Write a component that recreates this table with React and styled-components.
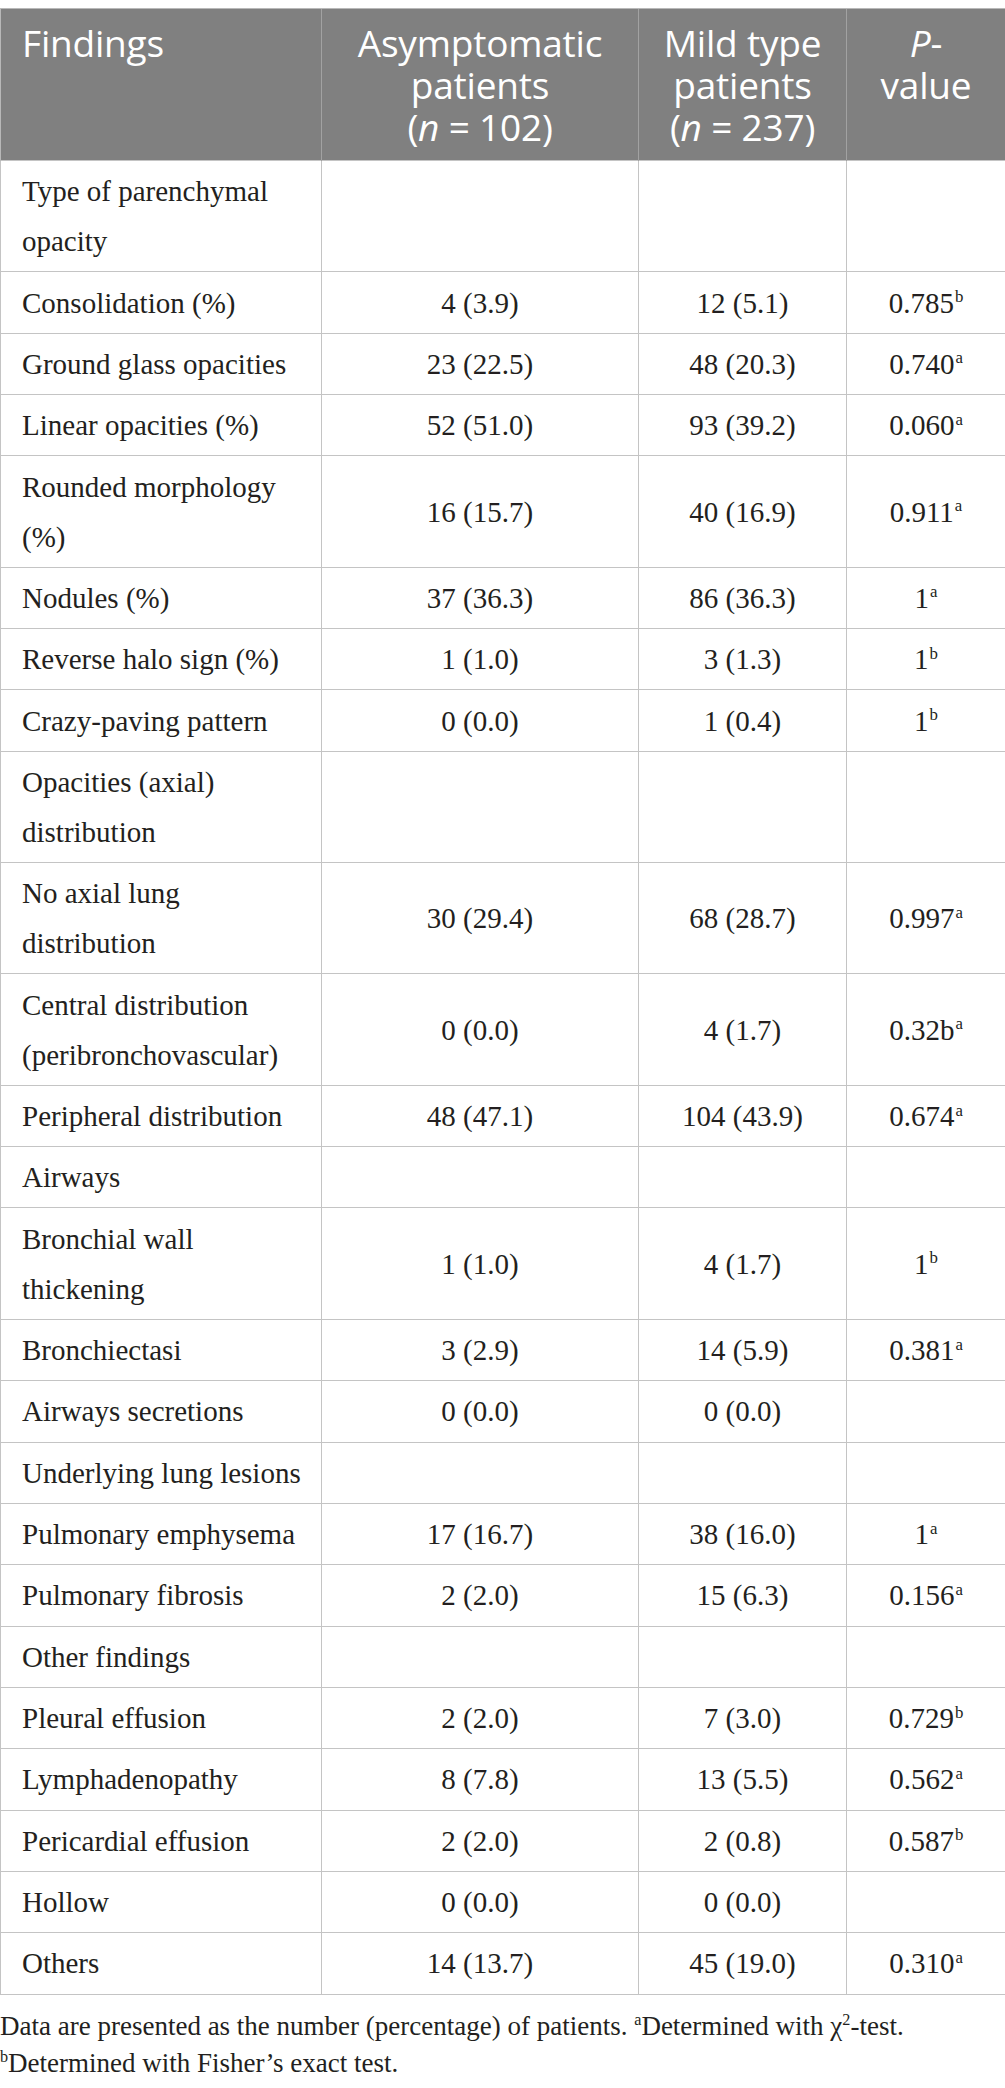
import React from "react";
import styled, { createGlobalStyle } from "styled-components";

const Global = createGlobalStyle`
  html, body { margin: 0; padding: 0; background: #ffffff; }
  body { font-family: "Liberation Serif", "Times New Roman", serif; color: #231f20; }
`;

const Page = styled.div`
  padding-top: 8px;
  width: 1005px;
`;

const Table = styled.table`
  width: 1005px;
  table-layout: fixed;
  border-collapse: collapse;
  border: 1px solid #c4c4c4;
`;

const HeadRow = styled.tr`
  background: #808080;
`;

const Th = styled.th`
  font-family: "Open Sans", "Noto Sans", sans-serif;
  font-weight: 400;
  font-size: 37px;
  line-height: 42px;
  color: #ffffff;
  text-align: ${(p) => (p.$left ? "left" : "center")};
  vertical-align: top;
  padding: ${(p) => (p.$left ? "12.5px 12px 12.5px 21px" : "12.5px 12px")};
  border-left: 1px solid #a2a2a2;
  border-top: 1px solid #b8b8b8;
  &:first-child { border-left: 1px solid #b8b8b8; }
  &:last-child { border-right: 1px solid #b8b8b8; }
  letter-spacing: -0.2px;
`;

const Em = styled.i`
  font-style: italic;
`;

const Td = styled.td`
  font-size: 29px;
  line-height: 50px;
  padding: ${(p) => (p.$left ? "5.18px 8px 5.18px 21px" : "5.18px 12px")};
  border: 1px solid #c4c4c4;
  text-align: ${(p) => (p.$left ? "left" : "center")};
  vertical-align: middle;
  color: #231f20;
`;

const Sup = styled.sup`
  font-size: 0.58em;
  line-height: 0;
  vertical-align: 0.62em;
  margin-left: 1px;
`;

const Note = styled.div`
  margin-top: 13px;
  font-size: 27px;
  line-height: 37px;
  color: #231f20;
`;

const NoteSup = styled.sup`
  font-size: 0.6em;
  line-height: 0;
  vertical-align: 0.6em;
`;

const rows = [
  ["Type of parenchymal opacity", "", "", ""],
  ["Consolidation (%)", "4 (3.9)", "12 (5.1)", "0.785", "b"],
  ["Ground glass opacities", "23 (22.5)", "48 (20.3)", "0.740", "a"],
  ["Linear opacities (%)", "52 (51.0)", "93 (39.2)", "0.060", "a"],
  ["Rounded morphology (%)", "16 (15.7)", "40 (16.9)", "0.911", "a"],
  ["Nodules (%)", "37 (36.3)", "86 (36.3)", "1", "a"],
  ["Reverse halo sign (%)", "1 (1.0)", "3 (1.3)", "1", "b"],
  ["Crazy-paving pattern", "0 (0.0)", "1 (0.4)", "1", "b"],
  ["Opacities (axial) distribution", "", "", ""],
  ["No axial lung distribution", "30 (29.4)", "68 (28.7)", "0.997", "a"],
  ["Central distribution (peribronchovascular)", "0 (0.0)", "4 (1.7)", "0.32b", "a"],
  ["Peripheral distribution", "48 (47.1)", "104 (43.9)", "0.674", "a"],
  ["Airways", "", "", ""],
  ["Bronchial wall thickening", "1 (1.0)", "4 (1.7)", "1", "b"],
  ["Bronchiectasi", "3 (2.9)", "14 (5.9)", "0.381", "a"],
  ["Airways secretions", "0 (0.0)", "0 (0.0)", ""],
  ["Underlying lung lesions", "", "", ""],
  ["Pulmonary emphysema", "17 (16.7)", "38 (16.0)", "1", "a"],
  ["Pulmonary fibrosis", "2 (2.0)", "15 (6.3)", "0.156", "a"],
  ["Other findings", "", "", ""],
  ["Pleural effusion", "2 (2.0)", "7 (3.0)", "0.729", "b"],
  ["Lymphadenopathy", "8 (7.8)", "13 (5.5)", "0.562", "a"],
  ["Pericardial effusion", "2 (2.0)", "2 (0.8)", "0.587", "b"],
  ["Hollow", "0 (0.0)", "0 (0.0)", ""],
  ["Others", "14 (13.7)", "45 (19.0)", "0.310", "a"],
];

export default function App() {
  return (
    <Page>
      <Global />
      <Table>
        <colgroup>
          <col style={{ width: 321 }} />
          <col style={{ width: 317 }} />
          <col style={{ width: 208 }} />
          <col style={{ width: 159 }} />
        </colgroup>
        <thead>
          <HeadRow>
            <Th $left>Findings</Th>
            <Th>
              Asymptomatic
              <br />
              patients
              <br />(<Em>n</Em> = 102)
            </Th>
            <Th>
              Mild type
              <br />
              patients
              <br />(<Em>n</Em> = 237)
            </Th>
            <Th>
              <Em>P</Em>-
              <br />
              value
            </Th>
          </HeadRow>
        </thead>
        <tbody>
          {rows.map((r, i) => (
            <tr key={i}>
              <Td $left>{r[0]}</Td>
              <Td>{r[1]}</Td>
              <Td>{r[2]}</Td>
              <Td>
                {r[3]}
                {r[4] ? <Sup>{r[4]}</Sup> : null}
              </Td>
            </tr>
          ))}
        </tbody>
      </Table>
      <Note>
        Data are presented as the number (percentage) of patients. <NoteSup>a</NoteSup>Determined with χ<NoteSup>2</NoteSup>-test.
        <br />
        <NoteSup>b</NoteSup>Determined with Fisher’s exact test.
      </Note>
    </Page>
  );
}
